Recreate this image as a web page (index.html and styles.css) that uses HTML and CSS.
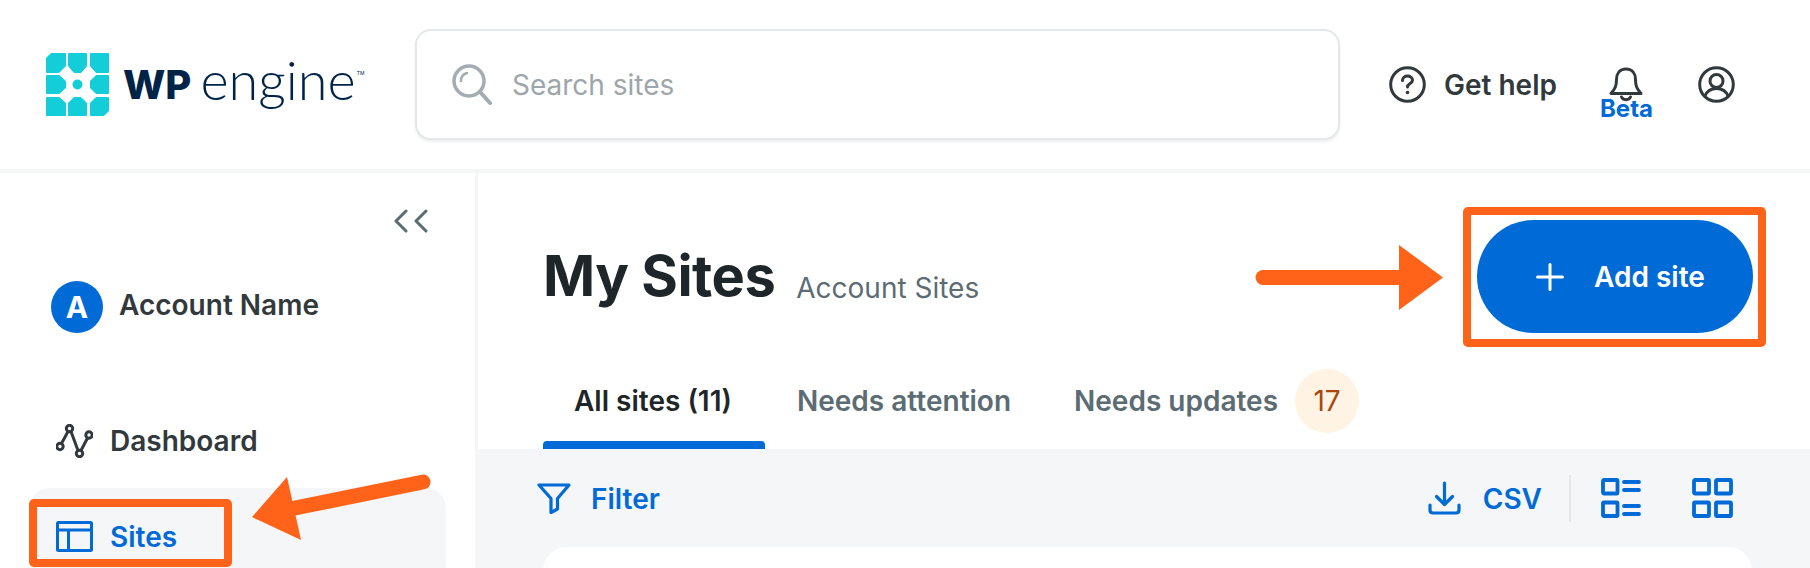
FILE: index.html
```html
<!DOCTYPE html>
<html lang="en">
<head>
    <meta charset="utf-8">
    <title>My Sites</title>
    <link rel="stylesheet" href="styles.css">
</head>
<body>
    <div id="page">
        <!-- top bar -->
        <header class="topbar">
            <a class="logo">
                <svg class="logo-mark" viewBox="0 0 63 63" width="63" height="63">
                    <g fill="#13ced8" stroke="#13ced8" stroke-width="1" stroke-linejoin="round">
                        <path d="M5 .5H19.500V13L13 19.500H.5V5Z"/>
                        <path d="M22.500 .5H40.500V13L35 19.500H28L22.500 13Z"/>
                        <path d="M44.500 .5H62.500V19.500H50L44.500 13Z"/>
                        <path d="M.5 22.500H13L19.500 28V35L13 40.500H.5Z"/>
                        <path d="M50 22.500H62.500V40.500H50L44.500 35V28Z"/>
                        <path d="M.5 44.500H13L19.500 50V62.500H.5Z"/>
                        <path d="M28 44.500H35L40.500 50V62.500H22.500V50Z"/>
                        <path d="M50 44.500H62.500V58L58 62.500H44.500V50Z"/>
                    </g>
                    <circle cx="31.500" cy="31.500" r="5" fill="#13ced8"/>
                </svg>
                <span class="logo-wp">WP</span>
                <span class="logo-engine">engine</span>
                <span class="logo-tm">TM</span>
            </a>
            <div class="search">
                <svg class="search-icon" viewBox="0 0 40 42" width="40" height="42" fill="none" stroke="#a3adb1" stroke-linecap="round">
                    <circle cx="17" cy="17" r="15" stroke-width="3.500"/>
                    <path d="M29 29L38 39" stroke-width="4"/>
                    <path d="M9 17C9 13 11 10 15 9" stroke-width="2.500"/>
                </svg>
                <span class="search-text">Search sites</span>
            </div>
            <div class="top-actions">
                <a class="help">
                    <svg viewBox="0 0 37 37" width="37" height="37" fill="none" stroke="#32393d" stroke-width="3">
                        <circle cx="18.500" cy="18.500" r="16.800"/>
                        <path d="M13.500 14.500C13.500 11.500 16 10 18.500 10C21 10 23.500 11.500 23.500 14.200C23.500 17.500 18.500 17.500 18.500 21" stroke-linecap="round"/>
                        <circle cx="18.500" cy="26.500" r="1.800" fill="#32393d" stroke="none"/>
                    </svg>
                    <span>Get help</span>
                </a>
                <a class="bell">
                    <svg viewBox="0 0 34 36" width="34" height="36" fill="none" stroke="#32393d" stroke-width="3" stroke-linejoin="round" stroke-linecap="round">
                        <path d="M17 2C10.500 2 7.500 7 7.500 12.500C7.500 19 6 22 2 26.500H32C28 22 26.500 19 26.500 12.500C26.500 7 23.500 2 17 2Z"/>
                        <path d="M12.500 30C14 33.500 20 33.500 21.500 30"/>
                    </svg>
                    <span class="beta">Beta</span>
                </a>
                <a class="user">
                    <svg viewBox="0 0 37 37" width="37" height="37" fill="none" stroke="#32393d" stroke-width="3">
                        <circle cx="18.500" cy="18.500" r="16.800"/>
                        <circle cx="18.500" cy="15" r="6.500"/>
                        <path d="M7 30C9 25 13 22.500 18.500 22.500C24 22.500 28 25 30 30"/>
                    </svg>
                </a>
            </div>
        </header>

        <div class="layout">
            <!-- left nav -->
            <nav class="sidebar">
                <a class="collapse">
                    <svg viewBox="0 0 34 24" width="34" height="24" fill="none" stroke="#5b6c74" stroke-width="3" stroke-linecap="round" stroke-linejoin="round">
                        <path d="M12 2L2 12L12 22"/>
                        <path d="M32 2L22 12L32 22"/>
                    </svg>
                </a>
                <div class="account">
                    <span class="avatar">A</span>
                    <span class="account-name">Account Name</span>
                </div>
                <a class="nav-item">
                    <svg viewBox="0 0 37 34" width="37" height="34" fill="none" stroke="#32393d" stroke-width="3">
                        <circle cx="13.500" cy="4.500" r="3.200"/>
                        <circle cx="4" cy="22.500" r="3.200"/>
                        <circle cx="23.500" cy="29.500" r="3.200"/>
                        <circle cx="33" cy="11" r="3.200"/>
                        <path d="M12 7.500L5.500 19.500M15 7.500L22 26.500M25 26.500L31.500 14"/>
                    </svg>
                    <span>Dashboard</span>
                </a>
                <a class="nav-item nav-active">
                    <svg viewBox="0 0 37 31" width="37" height="31" fill="none" stroke="#006bd6" stroke-width="3">
                        <rect x="1.500" y="1.500" width="34" height="28" rx="1"/>
                        <path d="M1.500 9H35.500M12.500 9V29.500"/>
                    </svg>
                    <span class="nav-label">Sites</span>
                </a>
            </nav>

            <!-- page content -->
            <main class="main">
                <div class="page-head">
                    <div class="title-wrap">
                        <h1>My Sites</h1>
                        <span class="subtitle">Account Sites</span>
                    </div>
                    <a class="btn-add">
                        <svg viewBox="0 0 28 28" width="28" height="28" stroke="#fff" stroke-width="3" stroke-linecap="round">
                            <path d="M14 1.500V26.500M1.500 14H26.500"/>
                        </svg>
                        <span>Add site</span>
                    </a>
                </div>
                <div class="tabs">
                    <a class="tab tab-active">All sites (11)</a>
                    <a class="tab">Needs attention</a>
                    <a class="tab tab-updates">Needs updates</a>
                    <span class="badge">17</span>
                </div>
                <div class="panel">
                    <div class="toolbar">
                        <a class="tool-link filter">
                            <svg viewBox="0 0 34 31" width="34" height="31" fill="none" stroke="#006bd6" stroke-width="3.200" stroke-linejoin="round">
                                <path d="M2 2H32L20.500 15.500V26L14 29.500V15.500Z"/>
                            </svg>
                            <span>Filter</span>
                        </a>
                        <div class="tool-right">
                            <a class="tool-link csv">
                                <svg viewBox="0 0 33 34" width="33" height="34" fill="none" stroke="#006bd6" stroke-width="3.200" stroke-linecap="round" stroke-linejoin="round">
                                    <path d="M16.500 2V23M8.500 15.500L16.500 23.500L24.500 15.500"/>
                                    <path d="M2 24V29C2 31 3 32 5 32H28C30 32 31 31 31 29V24"/>
                                </svg>
                                <span>CSV</span>
                            </a>
                            <span class="tool-divider"></span>
                            <svg class="view-list" viewBox="0 0 40 40" width="40" height="40" fill="none" stroke="#006bd6" stroke-width="3.800">
                                <rect x="2" y="2" width="14.500" height="13.500" rx="1"/>
                                <rect x="2" y="24.500" width="14.500" height="13.500" rx="1"/>
                                <path d="M23 4H38M23 12H38M23 28H38M23 36H38" stroke-linecap="round"/>
                            </svg>
                            <svg class="view-grid" viewBox="0 0 41 40" width="41" height="40" fill="none" stroke="#006bd6" stroke-width="3.800">
                                <rect x="2" y="2" width="15" height="13.500" rx="1"/>
                                <rect x="24" y="2" width="15" height="13.500" rx="1"/>
                                <rect x="2" y="24.500" width="15" height="13.500" rx="1"/>
                                <rect x="24" y="24.500" width="15" height="13.500" rx="1"/>
                            </svg>
                        </div>
                    </div>
                    <div class="card"></div>
                </div>
            </main>
        </div>

        <!-- orange callouts drawn on top of the screenshot -->
        <svg class="callouts" viewBox="0 0 1810 568" width="1810" height="568" fill="none" stroke="#ff6319" stroke-linejoin="round">
            <rect x="33" y="503" width="195" height="60" rx="1" stroke-width="8"/>
            <path d="M423 482L295 508" stroke-width="15" stroke-linecap="round"/>
            <path d="M252 517L287 477L301 540Z" fill="#ff6319" stroke="none"/>
            <rect x="1467" y="211" width="295" height="132" rx="1" stroke-width="8"/>
            <path d="M1263 277.500H1402" stroke-width="15" stroke-linecap="round"/>
            <path d="M1399 245L1443 277.500L1399 310Z" fill="#ff6319" stroke="none"/>
        </svg>
    </div>
</body>
</html>
```

FILE: styles.css
```css
/* body props */
body {
    margin: 0;
    background-color: #fff;
    font-family: Inter, "Liberation Sans", sans-serif;
    font-size: 28px;
    color: #32393d;
}
a {
    display: block;
    text-decoration: none;
}
svg {
    display: block;
    flex: none;
}
#page {
    position: relative;
    width: 1810px;
    height: 568px;
    overflow: hidden;
}

/* top bar */
.topbar {
    display: flex;
    align-items: center;
    height: 169px;
    padding-left: 46px;
    border-bottom: 4px solid #f5f6f6;
}
.logo {
    display: flex;
    align-items: center;
    width: 369px;
    height: 63px;
}
.logo-wp {
    margin-left: 14px;
    font-size: 40px;
    font-weight: 800;
    color: #002447;
}
.logo-engine {
    margin-left: 9px;
    margin-bottom: 10px;
    font-family: Lato, sans-serif;
    font-size: 54px;
    font-weight: 300;
    color: #002447;
}
.logo-tm {
    margin-left: 1px;
    margin-bottom: 24px;
    font-size: 5px;
    color: #002447;
}
.search {
    display: flex;
    align-items: center;
    box-sizing: border-box;
    width: 925px;
    height: 111px;
    padding-left: 35px;
    background-color: #fff;
    border: 2px solid #e4e8ea;
    border-radius: 16px;
    box-shadow: 0 2px 3px rgba(0, 0, 0, .07);
}
.search-text {
    margin-left: 20px;
    color: #9da6aa;
}
.top-actions {
    display: flex;
    align-items: center;
    margin-left: 49px;
}
.help {
    display: flex;
    align-items: center;
    gap: 18px;
    font-weight: 600;
}
.bell {
    position: relative;
    margin-left: 52px;
    margin-top: 1px;
}
.beta {
    position: absolute;
    left: -9px;
    top: 27px;
    font-size: 24px;
    font-weight: 700;
    color: #006bd6;
}
.user {
    margin-left: 55px;
}

/* main layout */
.layout {
    display: flex;
    height: 395px;
}
.sidebar {
    box-sizing: border-box;
    width: 478px;
    flex: none;
    border-right: 3px solid #f5f6f6;
}
.collapse {
    width: 34px;
    margin: 36px 0 0 394px;
}
.account {
    display: flex;
    align-items: center;
    margin: 48px 0 0 51px;
}
.avatar {
    display: flex;
    align-items: center;
    justify-content: center;
    width: 52px;
    height: 52px;
    border-radius: 50%;
    background-color: #006bd6;
    color: #fff;
    font-size: 30px;
    font-weight: 700;
}
.account-name {
    margin-left: 16px;
    margin-bottom: 4px;
    font-weight: 600;
}
.nav-item {
    display: flex;
    align-items: center;
    gap: 17px;
    box-sizing: border-box;
    width: 416px;
    margin-left: 30px;
    padding-left: 26px;
    font-weight: 600;
}
.account + .nav-item {
    margin-top: 91px;
}
.nav-active {
    height: 96px;
    margin-top: 30px;
    background-color: #f4f6f8;
    border-radius: 20px;
    color: #006bd6;
}
.nav-label {
    margin-top: 2px;
}

.main {
    flex: 1;
    display: flex;
    flex-direction: column;
}
.page-head {
    display: flex;
    flex: none;
    justify-content: space-between;
    align-items: flex-start;
    padding: 47px 57px 0 65px;
}
.title-wrap {
    display: flex;
    align-items: flex-end;
    gap: 21px;
    margin-top: 22px;
}
h1 {
    margin: 0;
    font-size: 56px;
    font-weight: 700;
    letter-spacing: -.5px;
    color: #1f2629;
}
.subtitle {
    margin-bottom: 5px;
    color: #5b6c74;
}
.btn-add {
    display: flex;
    align-items: center;
    box-sizing: border-box;
    width: 276px;
    height: 113px;
    padding-left: 59px;
    gap: 30px;
    background-color: #006bd6;
    border-radius: 57px;
    color: #fff;
    font-weight: 600;
}

/* tabs */
.tabs {
    display: flex;
    flex: none;
    align-items: center;
    height: 89px;
    margin-top: 27px;
    padding-left: 65px;
    font-weight: 600;
    color: #5b6c74;
}
.tab {
    position: relative;
    display: flex;
    align-items: center;
    align-self: stretch;
    padding: 0 32px 8px 31px;
}
.tab + .tab {
    padding-left: 33px;
}
.tab-active {
    color: #1f2629;
}
.tab-active::after {
    content: "";
    position: absolute;
    left: 0;
    right: -1px;
    bottom: 0;
    height: 8px;
    background-color: #006bd6;
    border-radius: 4px 4px 0 0;
}
.tab + .tab-updates {
    padding-left: 31px;
    padding-right: 17px;
}
.badge {
    display: flex;
    align-items: center;
    justify-content: center;
    width: 64px;
    height: 64px;
    margin-bottom: 8px;
    border-radius: 50%;
    background-color: #fff4e3;
    color: #ab4610;
    font-weight: 400;
}

/* grey panel */
.panel {
    flex: 1 0 0;
    padding: 0 58px 0 65px;
    background-color: #f4f6f8;
}
.toolbar {
    display: flex;
    align-items: center;
    justify-content: space-between;
    height: 98px;
    padding-right: 19px;
    margin-left: -6px;
}
.tool-link {
    display: flex;
    align-items: center;
    color: #006bd6;
    font-weight: 600;
}
.tool-link span {
    margin-top: 2px;
}
.filter {
    gap: 20px;
}
.csv {
    gap: 22px;
}
.tool-right {
    display: flex;
    align-items: center;
}
.tool-divider {
    width: 2px;
    height: 47px;
    margin: 0 30px 0 27px;
    background-color: #e3e7ea;
}
.view-grid {
    margin-left: 51px;
}
.card {
    height: 60px;
    background-color: #fff;
    border-radius: 24px 24px 0 0;
}

.callouts {
    position: absolute;
    left: 0;
    top: 0;
    pointer-events: none;
}
```
